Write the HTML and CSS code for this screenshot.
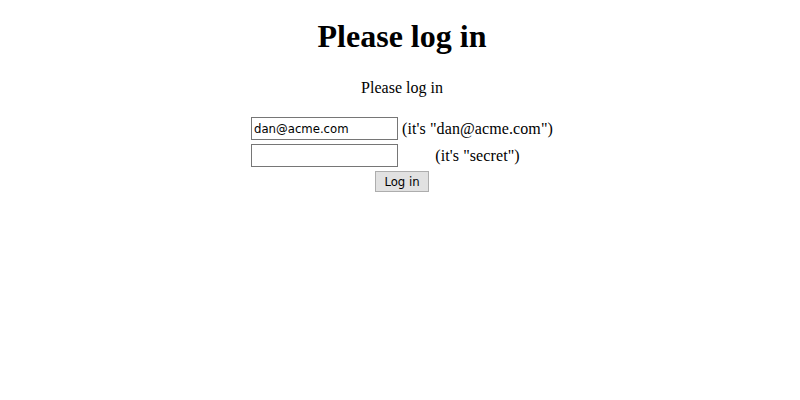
FILE: index.html
```html
<!DOCTYPE html>
<html>
<head>
<meta charset="utf-8">
<title>Please log in</title>
<link rel="stylesheet" href="styles.css">
</head>
<body class="page">
<h1 class="title">Please log in</h1>
<p class="intro">Please log in</p>
<form class="login">
<table class="grid">
<tr>
<td><input class="field" type="text" name="email" value="dan@acme.com"></td>
<td class="hint">(it's "dan@acme.com")</td>
</tr>
<tr>
<td><input class="field" type="password" name="password"></td>
<td class="hint">(it's "secret")</td>
</tr>
</table>
<div class="actions"><button class="submit" type="submit">Log in</button></div>
</form>
</body>
</html>
```
FILE: styles.css
```css
.page {
  margin: 8px 8px 8px 12px;
  font-family: "Liberation Serif", "Times New Roman", serif;
  font-size: 16px;
  color: #000;
  background: #fff;
  text-align: center;
}
.title {
  font-size: 32px;
  font-weight: bold;
  margin: 10px 0 24px;
}
.intro {
  margin: 0 0 17px;
}
.login {
  margin: 0;
}
.grid {
  margin: 0 auto;
  border-spacing: 2px;
}
.grid td {
  padding: 1px;
  text-align: center;
  vertical-align: middle;
}
.hint {
  letter-spacing: 0.1px;
}
.field {
  display: block;
  font-family: "DejaVu Sans Condensed", Tahoma, sans-serif;
  font-size: 13px;
  color: #000;
  width: 147px;
  height: 23px;
  padding: 1px 2px;
  border: 1px solid #767676;
  margin: 0;
  box-sizing: border-box;
  background: #fff;
}
.actions {
  display: flex;
  justify-content: center;
  padding-top: 1px;
}
.submit {
  font-family: "DejaVu Sans Condensed", Tahoma, sans-serif;
  font-size: 13px;
  color: #000;
  width: 54px;
  height: 21px;
  padding: 0;
  border: 1px solid #adadad;
  background: #e1e1e1;
  margin: 0;
  box-sizing: border-box;
}
```
